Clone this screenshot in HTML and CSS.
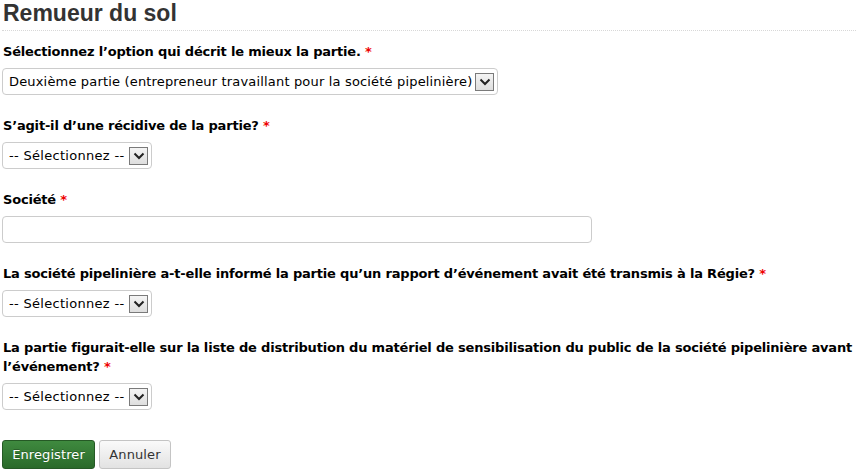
FILE: index.html
```html
<!DOCTYPE html>
<html lang="fr">
<head>
<meta charset="utf-8">
<title>Remueur du sol</title>
<link rel="stylesheet" href="styles.css">
</head>
<body>
<main class="page">
  <h1 class="title">Remueur du sol</h1>
  <form class="form">
    <div class="field">
      <label class="label">Sélectionnez l’option qui décrit le mieux la partie. <span class="req">*</span></label>
      <div class="select">
        <span class="select-text">Deuxième partie (entrepreneur travaillant pour la société pipelinière)</span>
        <span class="arrow"><svg width="12" height="8" viewBox="0 0 12 8"><path d="M1.5 1.5 L6 6 L10.5 1.5" fill="none" stroke="#222" stroke-width="2"/></svg></span>
      </div>
    </div>
    <div class="field">
      <label class="label">S’agit-il d’une récidive de la partie? <span class="req">*</span></label>
      <div class="select select-short">
        <span class="select-text">-- Sélectionnez --</span>
        <span class="arrow"><svg width="12" height="8" viewBox="0 0 12 8"><path d="M1.5 1.5 L6 6 L10.5 1.5" fill="none" stroke="#222" stroke-width="2"/></svg></span>
      </div>
    </div>
    <div class="field">
      <label class="label">Société <span class="req">*</span></label>
      <div class="input"></div>
    </div>
    <div class="field">
      <label class="label">La société pipelinière a-t-elle informé la partie qu’un rapport d’événement avait été transmis à la Régie? <span class="req">*</span></label>
      <div class="select select-short">
        <span class="select-text">-- Sélectionnez --</span>
        <span class="arrow"><svg width="12" height="8" viewBox="0 0 12 8"><path d="M1.5 1.5 L6 6 L10.5 1.5" fill="none" stroke="#222" stroke-width="2"/></svg></span>
      </div>
    </div>
    <div class="field">
      <label class="label">La partie figurait-elle sur la liste de distribution du matériel de sensibilisation du public de la société pipelinière avant l’événement? <span class="req">*</span></label>
      <div class="select select-short">
        <span class="select-text">-- Sélectionnez --</span>
        <span class="arrow"><svg width="12" height="8" viewBox="0 0 12 8"><path d="M1.5 1.5 L6 6 L10.5 1.5" fill="none" stroke="#222" stroke-width="2"/></svg></span>
      </div>
    </div>
    <div class="actions">
      <span class="btn btn-primary">Enregistrer</span>
      <span class="btn btn-default">Annuler</span>
    </div>
  </form>
</main>
</body>
</html>
```
FILE: styles.css
```css
html, body {
  margin: 0;
  padding: 0;
  background: #fff;
}
body {
  font-family: "DejaVu Sans", Verdana, sans-serif;
  font-size: 13px;
  color: #000;
}
.page {
  padding: 0 0 0 2px;
}
.title {
  font-family: "Liberation Sans", Arial, sans-serif;
  font-weight: bold;
  font-size: 23px;
  line-height: 26px;
  color: #333;
  margin: 0;
  padding: 0 0 4px 1px;
  border-bottom: 1px dotted #d8d8d8;
}
.form {
  display: flex;
  flex-direction: column;
  padding-top: 11px;
}
.field {
  display: flex;
  flex-direction: column;
  align-items: flex-start;
  margin-bottom: 21px;
}
.label {
  font-weight: bold;
  line-height: 19px;
  letter-spacing: -0.19px;
  padding-left: 1px;
  margin-bottom: 7px;
}
.req {
  color: #e00;
}
.select {
  box-sizing: border-box;
  display: inline-flex;
  align-items: center;
  gap: 3px;
  height: 27px;
  padding: 0 3px 0 6px;
  border: 1px solid #ccc;
  border-radius: 4px;
  background: #fff;
}
.select-short {
  width: 150px;
  justify-content: space-between;
}
.select-text {
  white-space: nowrap;
  letter-spacing: 0.17px;
}
.select-short .select-text {
  letter-spacing: 0.3px;
}
.arrow {
  box-sizing: border-box;
  display: inline-flex;
  align-items: center;
  justify-content: center;
  width: 19px;
  height: 18px;
  border: 1px solid #7a7a7a;
  background: linear-gradient(#f4f4f4, #dedede);
}
.input {
  box-sizing: border-box;
  width: 590px;
  height: 27px;
  border: 1px solid #ccc;
  border-radius: 4px;
}
.actions {
  display: flex;
  gap: 4px;
  padding-top: 9px;
}
.btn {
  box-sizing: border-box;
  display: inline-flex;
  align-items: center;
  justify-content: center;
  height: 29px;
  font-size: 13px;
  letter-spacing: 0.1px;
  border-radius: 3px;
}
.btn-primary {
  width: 93px;
  color: #fff;
  background: linear-gradient(#3f8a3f, #2a6a2a);
  border: 1px solid #255925;
  text-shadow: 0 -1px 0 rgba(0,0,0,0.25);
}
.btn-default {
  width: 72px;
  color: #333;
  background: linear-gradient(#fafafa, #e2e2e2);
  border: 1px solid #c4c4c4;
}
```
